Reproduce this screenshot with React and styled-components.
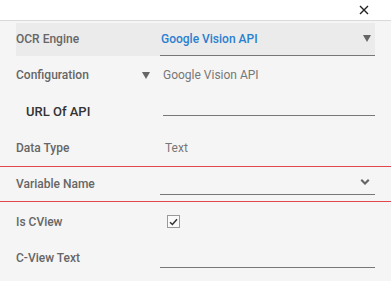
import React from 'react';
import styled, { createGlobalStyle } from 'styled-components';

const GlobalStyle = createGlobalStyle`
  html, body {
    margin: 0;
    padding: 0;
    background: #f5f5f5;
  }
  body {
    font-family: Roboto, "Liberation Sans", Arial, sans-serif;
  }
`;

const Panel = styled.div`
  width: 391px;
  height: 281px;
  background: #f5f5f5;
  overflow: hidden;
`;

const Header = styled.div`
  height: 20px;
  background: #fff;
  border-bottom: 1px solid #d9d9d9;
  display: flex;
  justify-content: flex-end;
  align-items: center;
  padding-right: 22px;
`;

const CloseButton = styled.button`
  border: none;
  background: none;
  padding: 0;
  width: 10px;
  height: 10px;
  display: flex;
  cursor: pointer;
`;

const Row = styled.div`
  height: ${props => props.$h || '36px'};
  box-sizing: border-box;
  display: flex;
  align-items: center;
  padding: ${props => props.$pt || '0'} 16px 0;
  border-top: ${props => (props.$bordered ? '1px solid #e2474d' : 'none')};
  border-bottom: ${props => (props.$bordered ? '1px solid #e2474d' : 'none')};
`;

const RowInner = styled.div`
  flex: 1;
  height: ${props => (props.$highlight ? '33px' : '100%')};
  display: flex;
  align-items: center;
  background: ${props => (props.$highlight ? '#ebebeb' : 'transparent')};
`;

const Label = styled.div`
  width: ${props => props.$width || '144px'};
  flex-shrink: 0;
  font-size: ${props => (props.$strong ? '13px' : '12px')};
  font-weight: 500;
  color: ${props => (props.$strong ? '#333' : '#666')};
  padding-left: ${props => (props.$strong ? '10px' : '0')};
  box-sizing: border-box;
`;

const Field = styled.div`
  flex: 1;
  align-self: stretch;
  display: flex;
  align-items: center;
  justify-content: space-between;
  border-bottom: ${props => (props.$underline ? '1px solid #777' : 'none')};
  margin-bottom: ${props => props.$drop || '0'};
`;

const SelectValue = styled.span`
  font-size: 12px;
  font-weight: 500;
  color: #2b7fcf;
  padding-left: 1px;
`;

const StaticValue = styled.span`
  font-size: 12px;
  color: #777;
  padding-left: ${props => props.$pl || '5px'};
`;

const Caret = styled.span`
  display: inline-block;
  width: 0;
  height: 0;
  border-left: 4.5px solid transparent;
  border-right: 4.5px solid transparent;
  border-top: 7px solid ${props => props.$color || '#777'};
  margin-right: ${props => props.$mr || '4px'};
`;

const ConfigField = styled.div`
  display: flex;
  align-items: center;
  gap: 13px;
  margin-left: -1px;
`;

const CheckBox = styled.span`
  width: 11px;
  height: 11px;
  border: 1px solid #999;
  background: #fafafa;
  margin-left: 7px;
  display: flex;
  align-items: center;
  justify-content: center;
`;

const Chevron = () => (
  <svg width="10" height="8" viewBox="0 0 10 8" style={{ marginRight: '5px', marginTop: '4px' }}>
    <path d="M0.5 1.5 L2 0 L5 3 L8 0 L9.5 1.5 L5 6 Z" fill="#666" />
  </svg>
);

export default function App() {
  return (
    <>
      <GlobalStyle />
      <Panel>
        <Header>
          <CloseButton aria-label="close">
            <svg width="10" height="10" viewBox="0 0 10 10">
              <path d="M1 1 L9 9 M9 1 L1 9" stroke="#222" strokeWidth="1.4" />
            </svg>
          </CloseButton>
        </Header>

        <Row>
          <RowInner $highlight>
            <Label>OCR Engine</Label>
            <Field $underline>
              <SelectValue>Google Vision API</SelectValue>
              <Caret $color="#666" />
            </Field>
          </RowInner>
        </Row>

        <Row>
          <Label $width="127px">Configuration</Label>
          <ConfigField>
            <Caret $color="#666" $mr="0" />
            <StaticValue $pl="0">Google Vision API</StaticValue>
          </ConfigField>
        </Row>

        <Row $h="37px">
          <Label $strong $width="147px">URL Of API</Label>
          <Field $underline $drop="14px" />
        </Row>

        <Row>
          <Label>Data Type</Label>
          <StaticValue>Text</StaticValue>
        </Row>

        <Row $bordered>
          <Label>Variable Name</Label>
          <Field $underline $drop="6px">
            <span />
            <Chevron />
          </Field>
        </Row>

        <Row $h="36px" $pt="3px">
          <Label>Is CView</Label>
          <CheckBox>
            <svg width="9" height="8" viewBox="0 0 9 8">
              <path d="M1 4.2 L3.4 6.5 L8 1.2" fill="none" stroke="#333" strokeWidth="1.5" />
            </svg>
          </CheckBox>
        </Row>

        <Row $h="36px" $pt="3px">
          <Label>C-View Text</Label>
          <Field $underline $drop="6px" />
        </Row>
      </Panel>
    </>
  );
}
